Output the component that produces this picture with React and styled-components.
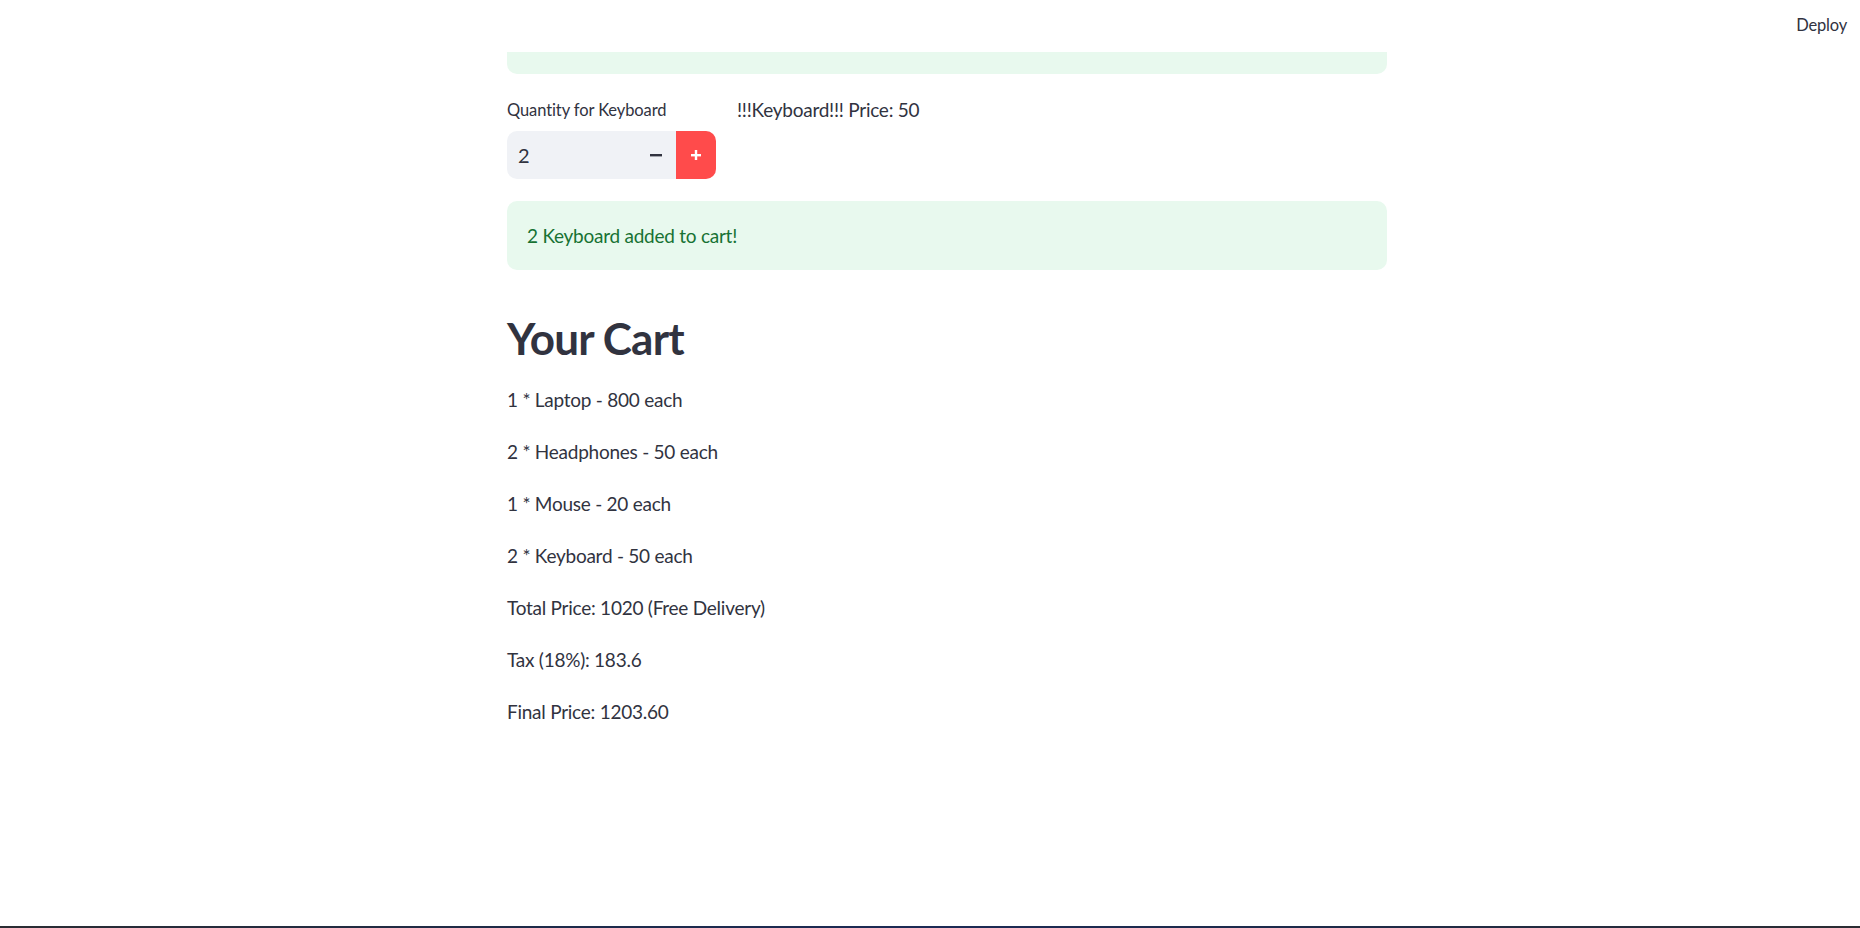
import React from 'react';
import styled, { createGlobalStyle } from 'styled-components';

const GlobalStyle = createGlobalStyle`
  html, body {
    margin: 0;
    padding: 0;
    background: #fff;
  }
  body {
    font-family: Lato, 'Noto Sans', sans-serif;
    color: #31333f;
    overflow: hidden;
  }
`;

const Page = styled.div`
  display: flex;
  flex-direction: column;
  height: 100vh;
`;

const Header = styled.header`
  display: flex;
  justify-content: flex-end;
  align-items: center;
  height: 52px;
  padding: 0 13px 2px 0;
  box-sizing: border-box;
  flex-shrink: 0;
`;

const DeployLink = styled.span`
  font-size: 16.5px;
  letter-spacing: -0.2px;
  color: #31333f;
`;

const Main = styled.main`
  display: flex;
  flex-direction: column;
  gap: 20px;
  width: 880px;
  margin-left: 507px;
`;

const AlertStub = styled.div`
  height: 22px;
  background: #e8f9ee;
  border-radius: 0 0 10px 10px;
`;

const Columns = styled.div`
  display: flex;
  gap: 20px;
  margin-bottom: 2px;
`;

const Column = styled.div`
  display: flex;
  flex-direction: column;
  width: ${(p) => p.width || 'auto'};
  flex: ${(p) => (p.width ? 'none' : 1)};
`;

const Label = styled.label`
  font-size: 16.5px;
  letter-spacing: -0.1px;
  line-height: 32px;
  margin-bottom: 5px;
`;

const NumberBox = styled.div`
  display: flex;
  height: 48px;
  width: 209px;
  border-radius: 10px;
  background: #f0f2f6;
  overflow: hidden;
`;

const NumberValue = styled.div`
  flex: 1;
  display: flex;
  align-items: center;
  padding-left: 11px;
  font-size: 20px;
`;

const StepButton = styled.div`
  width: 40px;
  display: flex;
  align-items: center;
  justify-content: center;
  background: ${(p) => (p.primary ? '#ff4b4b' : 'transparent')};
  color: ${(p) => (p.primary ? '#fff' : '#31333f')};
`;

const Text = styled.p`
  margin: 0;
  font-size: 19px;
  letter-spacing: -0.25px;
  line-height: 32px;
`;

const Success = styled.div`
  background: #e8f9ee;
  color: #177233;
  border-radius: 10px;
  padding: 19px 20px 18px;
  font-size: 19px;
  letter-spacing: -0.25px;
  line-height: 32px;
`;

const Title = styled.h2`
  margin: 0;
  padding: 21px 0 0;
  font-size: 44px;
  font-weight: 700;
  letter-spacing: -0.8px;
  line-height: 54px;
  color: #31333f;
`;

const CartLines = styled.div`
  display: flex;
  flex-direction: column;
  gap: 20px;
  margin-top: -1px;
`;

const BottomEdge = styled.div`
  margin-top: auto;
  height: 2px;
  background: linear-gradient(90deg, #2b2d33 0%, #1d2a4a 30%, #1c2a55 50%, #1d2a4a 70%, #2b2d33 100%);
`;

const Minus = () => (
  <svg width="14" height="14" viewBox="0 0 14 14">
    <rect x="1" y="6" width="12" height="2.4" fill="currentColor" />
  </svg>
);

const Plus = () => (
  <svg width="14" height="14" viewBox="0 0 14 14">
    <rect x="2" y="6" width="10" height="2.4" fill="currentColor" />
    <rect x="5.8" y="2" width="2.4" height="10" fill="currentColor" />
  </svg>
);

const cart = [
  '1 * Laptop - 800 each',
  '2 * Headphones - 50 each',
  '1 * Mouse - 20 each',
  '2 * Keyboard - 50 each',
  'Total Price: 1020 (Free Delivery)',
  'Tax (18%): 183.6',
  'Final Price: 1203.60',
];

export default function App() {
  return (
    <Page>
      <GlobalStyle />
      <Header>
        <DeployLink>Deploy</DeployLink>
      </Header>
      <Main>
        <AlertStub />
        <Columns>
          <Column width="210px">
            <Label>Quantity for Keyboard</Label>
            <NumberBox>
              <NumberValue>2</NumberValue>
              <StepButton>
                <Minus />
              </StepButton>
              <StepButton primary>
                <Plus />
              </StepButton>
            </NumberBox>
          </Column>
          <Column>
            <Text>!!!Keyboard!!! Price: 50</Text>
          </Column>
        </Columns>
        <Success>2 Keyboard added to cart!</Success>
        <div>
          <Title>Your Cart</Title>
        </div>
        <CartLines>
          {cart.map((line) => (
            <Text key={line}>{line}</Text>
          ))}
        </CartLines>
      </Main>
      <BottomEdge />
    </Page>
  );
}
